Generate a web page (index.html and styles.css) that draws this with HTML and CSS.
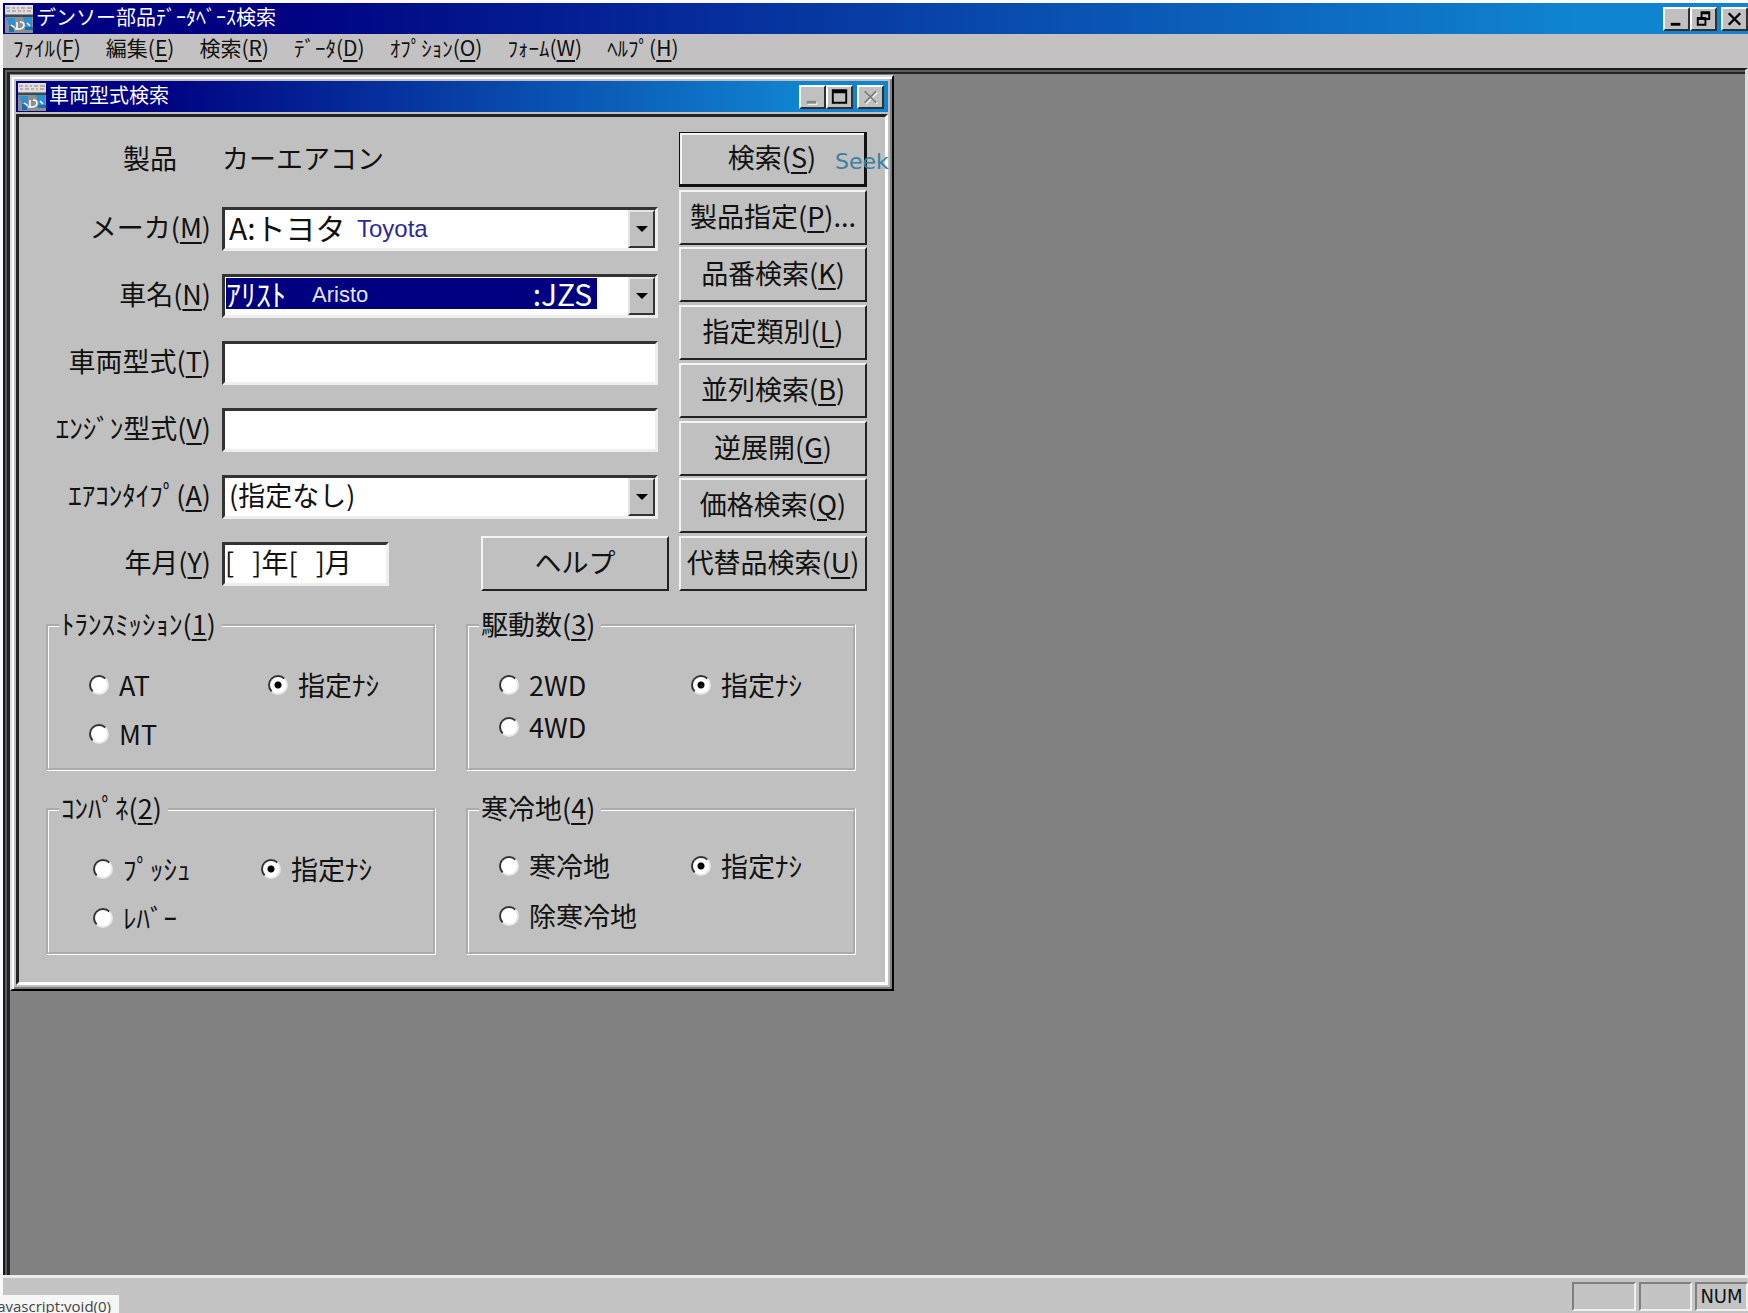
FILE: index.html
```html
<!DOCTYPE html>
<html lang="ja">
<head>
    <meta charset="UTF-8">
    <meta name="viewport" content="width=device-width, initial-scale=1.0">
    <title>デンソー部品ﾃﾞｰﾀﾍﾞｰｽ検索</title>
    <link rel="stylesheet" href="styles.css">
</head>
<body>

<!-- shared icons -->
<svg class="defs" aria-hidden="true">
    <symbol id="app-icon" viewBox="0 0 28 28">
        <rect width="28" height="28" fill="#8a8f92"/>
        <rect width="28" height="9" fill="#e2dcdc"/>
        <path d="M1 3h4M7 3h3M12 3h2M16 3h4M22 3h5M2 6h3M7 6h4M13 6h3M18 6h2M22 6h4" stroke="#8d8484" stroke-width="1"/>
        <path d="M0 10h28v2H0z" fill="#3b4a50"/>
        <path d="M1 13h9v7H4zM18 12h9v10h-6z" fill="#2f8fd0"/>
        <path d="M4 21h5v6H4zM20 22h8v3h-8z" fill="#1d6fae"/>
        <path d="M12 17v7M10 24h5q4-1 4-4t-4-3M6 20l4 3M22 18l3 3" fill="none" stroke="#fff" stroke-width="1.5"/>
    </symbol>
    <symbol id="arrow" viewBox="0 0 12 8">
        <path d="M0 1h12L6 7z" fill="#000"/>
    </symbol>
</svg>

<div class="app">
    <header class="title-bar">
        <svg class="app-icon"><use href="#app-icon"/></svg>
        <h1>デンソー部品ﾃﾞｰﾀﾍﾞｰｽ検索</h1>
        <div class="window-buttons">
            <button type="button" aria-label="最小化"><svg viewBox="0 0 24 20"><path d="M6 14h10v3H6z"/></svg></button>
            <button type="button" aria-label="元に戻す"><svg viewBox="0 0 24 20"><path d="M9 2h10v9h-4v6H5V8h4zM11 5v3h4v1h2V5zM7 11v4h6v-4z" fill-rule="evenodd"/></svg></button>
            <button type="button" aria-label="閉じる" class="close"><svg viewBox="0 0 24 20"><path d="M6 4l12 12M18 4L6 16" stroke="#000" stroke-width="2.5"/></svg></button>
        </div>
    </header>

    <nav class="menu">
        <button type="button">ﾌｧｲﾙ(<u>F</u>)</button>
        <button type="button">編集(<u>E</u>)</button>
        <button type="button">検索(<u>R</u>)</button>
        <button type="button">ﾃﾞｰﾀ(<u>D</u>)</button>
        <button type="button">ｵﾌﾟｼｮﾝ(<u>O</u>)</button>
        <button type="button">ﾌｫｰﾑ(<u>W</u>)</button>
        <button type="button">ﾍﾙﾌﾟ(<u>H</u>)</button>
    </nav>

    <main class="workspace">
        <section class="window">
            <div class="title-bar">
                <svg class="app-icon"><use href="#app-icon"/></svg>
                <h2>車両型式検索</h2>
                <div class="window-buttons">
                    <button type="button" aria-label="最小化"><svg viewBox="0 0 24 20"><path d="M7 15h10v3H7z" fill="#fff"/><path d="M6 14h10v3H6z" fill="#858585"/></svg></button>
                    <button type="button" aria-label="最大化"><svg viewBox="0 0 24 20"><path d="M4 2h16v15H4zM6 6v9h12V6z" fill-rule="evenodd"/></svg></button>
                    <button type="button" aria-label="閉じる" class="close" disabled><svg viewBox="0 0 24 20"><path d="M7 5l12 12M19 5L7 17" stroke="#fff" stroke-width="2"/><path d="M6 4l12 12M18 4L6 16" stroke="#808080" stroke-width="2"/></svg></button>
                </div>
            </div>

            <form class="panel">
                <div class="search">
                    <div class="fields">
                        <div class="row product">
                            <span class="label">製品</span>
                            <span class="value">カーエアコン</span>
                        </div>
                        <div class="row">
                            <label class="label" for="maker">メーカ(<u>M</u>)</label>
                            <div class="combo">
                                <select id="maker" class="wide-text">
                                    <option>A:トヨタ</option>
                                </select>
                                <span class="drop"><svg><use href="#arrow"/></svg></span>
                                <span class="note note-maker">Toyota</span>
                            </div>
                        </div>
                        <div class="row">
                            <label class="label" for="car">車名(<u>N</u>)</label>
                            <div class="combo">
                                <select id="car" class="wide-text selected">
                                    <option>ｱﾘｽﾄ　　　　　　　　&nbsp;:JZS</option>
                                </select>
                                <span class="drop"><svg><use href="#arrow"/></svg></span>
                                <span class="note note-car">Aristo</span>
                            </div>
                        </div>
                        <div class="row">
                            <label class="label" for="model">車両型式(<u>T</u>)</label>
                            <input type="text" id="model">
                        </div>
                        <div class="row">
                            <label class="label" for="engine">ｴﾝｼﾞﾝ型式(<u>V</u>)</label>
                            <input type="text" id="engine">
                        </div>
                        <div class="row">
                            <label class="label" for="aircon">ｴｱｺﾝﾀｲﾌﾟ(<u>A</u>)</label>
                            <div class="combo">
                                <select id="aircon">
                                    <option>(指定なし)</option>
                                </select>
                                <span class="drop"><svg><use href="#arrow"/></svg></span>
                            </div>
                        </div>
                        <div class="row">
                            <label class="label" for="date">年月(<u>Y</u>)</label>
                            <input type="text" id="date" class="date" value="[&nbsp;&nbsp;&nbsp;]年[&nbsp;&nbsp;&nbsp;]月">
                            <button type="button" class="btn help">ヘルプ</button>
                        </div>
                    </div>

                    <div class="actions">
                        <button type="submit" class="btn default">検索(<u>S</u>)</button>
                        <span class="note note-seek">Seek</span>
                        <button type="button" class="btn">製品指定(<u>P</u>)...</button>
                        <button type="button" class="btn">品番検索(<u>K</u>)</button>
                        <button type="button" class="btn">指定類別(<u>L</u>)</button>
                        <button type="button" class="btn">並列検索(<u>B</u>)</button>
                        <button type="button" class="btn">逆展開(<u>G</u>)</button>
                        <button type="button" class="btn">価格検索(<u>Q</u>)</button>
                        <button type="button" class="btn">代替品検索(<u>U</u>)</button>
                    </div>
                </div>

                <div class="groups">
                    <fieldset class="transmission">
                        <legend>ﾄﾗﾝｽﾐｯｼｮﾝ(<u>1</u>)</legend>
                        <div class="options">
                            <label><input type="radio" name="transmission">AT</label>
                            <label><input type="radio" name="transmission" checked>指定ﾅｼ</label>
                            <label><input type="radio" name="transmission">MT</label>
                        </div>
                    </fieldset>
                    <fieldset class="drive">
                        <legend>駆動数(<u>3</u>)</legend>
                        <div class="options">
                            <label><input type="radio" name="drive">2WD</label>
                            <label><input type="radio" name="drive" checked>指定ﾅｼ</label>
                            <label><input type="radio" name="drive">4WD</label>
                        </div>
                    </fieldset>
                    <fieldset class="control">
                        <legend>ｺﾝﾊﾟﾈ(<u>2</u>)</legend>
                        <div class="options">
                            <label><input type="radio" name="control">ﾌﾟｯｼｭ</label>
                            <label><input type="radio" name="control" checked>指定ﾅｼ</label>
                            <label><input type="radio" name="control">ﾚﾊﾞｰ</label>
                        </div>
                    </fieldset>
                    <fieldset class="cold">
                        <legend>寒冷地(<u>4</u>)</legend>
                        <div class="options">
                            <label><input type="radio" name="cold">寒冷地</label>
                            <label><input type="radio" name="cold" checked>指定ﾅｼ</label>
                            <label><input type="radio" name="cold">除寒冷地</label>
                        </div>
                    </fieldset>
                </div>
            </form>
        </section>
    </main>

    <footer class="status-bar">
        <span class="cell cell-wide"></span>
        <span class="cell"></span>
        <span class="cell">NUM</span>
    </footer>
</div>

<div class="link-hint"><span>javascript:void(0)</span></div>

</body>
</html>
```
FILE: styles.css
```css
* {
    margin: 0;
    padding: 0;
    box-sizing: border-box;
}
body {
    font-family: "Noto Sans CJK JP", sans-serif;
    font-weight: 400;
    font-size: 27px;
    line-height: 32px;
    color: #111;
    background-color: #fafafa;
}
button,
input,
select {
    font: inherit;
    color: inherit;
}
u {
    text-decoration-thickness: 2px;
    text-underline-offset: 4px;
}
.defs {
    position: absolute;
    width: 0;
    height: 0;
}
.app {
    display: flex;
    flex-direction: column;
    height: 100vh;
    padding: 3px 0 0 3px;
}

/* title bars */
.title-bar {
    display: flex;
    align-items: center;
    height: 31px;
    padding: 0 4px 0 2px;
    gap: 3px;
    background: linear-gradient(to right, #000080 15%, #1084d0 90%);
    color: #fff;
    flex: none;
}
.title-bar h1,
.title-bar h2 {
    padding-bottom: 3px;
    font-size: 20px;
    font-weight: 400;
    line-height: 28px;
}
.app-icon {
    width: 28px;
    height: 28px;
}
.window-buttons {
    display: flex;
    margin-left: auto;
}
.window-buttons button {
    width: 27px;
    height: 24px;
    background-color: #c0c0c0;
    border: 2px solid;
    border-color: #fff #303030 #303030 #fff;
}
.window-buttons .close {
    margin-left: 4px;
}
.window-buttons svg {
    display: block;
    width: 100%;
    height: 100%;
}
.app > .title-bar {
    padding-right: 0;
}

/* menu */
.menu {
    display: flex;
    gap: 25px;
    height: 34px;
    padding: 0 10px;
    background-color: #c3c1c1;
    flex: none;
}
.menu button {
    border: none;
    background: none;
    font-size: 21px;
    line-height: 26px;
    height: 26px;
}

/* workspace */
.workspace {
    flex: 1;
    display: flex;
    align-items: flex-start;
    padding: 5px;
    background-color: #818181;
    border: solid;
    border-width: 2px 3px 0 2px;
    border-color: #1a1a1c #dcdcdc #1a1a1c #1a1a1c;
    box-shadow: inset 2px 2px #5c5c5e, inset 5px 4px #242426;
}
.window {
    padding: 4px;
    background-color: #c0c0c0;
    border: 2px solid;
    border-color: #dcdcdc #000 #000 #dcdcdc;
    box-shadow: inset 2px 2px #fff, inset -2px -2px #808080;
}
.panel {
    margin-top: 2px;
    padding: 15px 18px 27px;
    border: 3px solid;
    border-color: #222 #fff #fff #222;
}
.search {
    display: flex;
    gap: 10px;
}
.fields {
    display: flex;
    flex-direction: column;
    gap: 12px;
    width: 632px;
}
.row {
    display: flex;
    align-items: center;
    gap: 11px;
    height: 55px;
}
.label,
.value {
    padding-bottom: 4px;
}
.label {
    width: 174px;
    text-align: right;
    white-space: nowrap;
    flex: none;
}
.product {
    margin-bottom: 2px;
}
.product .label {
    padding-right: 34px;
}
.row input,
.combo {
    width: 436px;
    height: 44px;
    background-color: #fff;
    border: 3px solid;
    border-color: #333 #eee #eee #333;
}
.row input {
    padding: 0 0 4px;
    outline: none;
}
.row .date {
    width: 167px;
}
.combo {
    position: relative;
    display: flex;
}
.combo select {
    flex: 1;
    min-width: 0;
    padding: 0 4px 3px;
    border: none;
    outline: none;
    appearance: none;
    background-color: #fff;
}
.combo .wide-text {
    font-size: 30px;
}
.combo .selected {
    padding: 0 1px 8px;
    color: #fff;
    background: linear-gradient(#000080, #000080) 1px 1px / 371px 31px no-repeat #fff;
}
.combo .selected option {
    color: #000;
}
.drop {
    display: flex;
    align-items: center;
    justify-content: center;
    width: 27px;
    background-color: #c0c0c0;
    border: 2px solid;
    border-color: #e4e4e4 #333 #333 #e4e4e4;
    pointer-events: none;
}
.drop svg {
    width: 12px;
    height: 8px;
}

/* english notes laid over the controls */
.note {
    position: absolute;
    font-family: "Liberation Sans", Arial, sans-serif;
    pointer-events: none;
}
.note-maker {
    left: 132px;
    top: 3px;
    font-size: 24px;
    color: #2a2a9c;
}
.note-car {
    left: 87px;
    top: 2px;
    font-size: 22px;
    color: #e4e4f4;
}
.note-seek {
    left: 156px;
    top: 14px;
    font-family: "DejaVu Sans", Verdana, sans-serif;
    font-size: 22px;
    color: #3c7f9c;
}

/* buttons */
.actions {
    position: relative;
    display: flex;
    flex-direction: column;
    justify-content: space-between;
    width: 188px;
}
.btn {
    width: 188px;
    height: 55px;
    padding-bottom: 3px;
    background-color: #c0c0c0;
    border: 2px solid;
    border-color: #f4f4f4 #222 #222 #f4f4f4;
    white-space: nowrap;
}
.default {
    border-color: #111;
    border-width: 1px 3px 3px 1px;
    box-shadow: inset 2px 2px #f4f4f4;
}
.help {
    margin-left: auto;
}

/* option groups */
.groups {
    display: grid;
    grid-template-columns: 1fr 1fr;
    gap: 22px 30px;
    margin: 18px 11px 0 9px;
}
fieldset {
    height: 162px;
    padding: 0 10px;
    border: 3px groove #fff;
}
legend {
    padding: 0 6px 3px 2px;
    line-height: 29px;
}
.options {
    display: grid;
    align-items: center;
    grid-auto-rows: 34px;
}
.options label {
    display: flex;
    align-items: center;
    gap: 10px;
    line-height: 34px;
}
.transmission .options {
    grid-template-columns: 179px 1fr;
    row-gap: 15px;
    padding: 27px 0 0 30px;
}
.control .options {
    grid-template-columns: 168px 1fr;
    row-gap: 15px;
    padding: 27px 0 0 34px;
}
.drive .options {
    grid-template-columns: 192px 1fr;
    row-gap: 8px;
    padding: 27px 0 0 20px;
}
.cold .options {
    grid-template-columns: 192px 1fr;
    row-gap: 16px;
    padding: 24px 0 0 20px;
}
input[type="radio"] {
    appearance: none;
    width: 20px;
    height: 20px;
    border: 2px solid;
    border-color: #333 #e8e8e8 #e8e8e8 #333;
    border-radius: 50%;
    background-color: #fff;
}
input[type="radio"]:checked {
    background-image: radial-gradient(circle, #000 3px, #fff 4px);
}

/* status bar */
.status-bar {
    display: flex;
    justify-content: flex-end;
    gap: 3px;
    height: 38px;
    padding: 4px 0 2px;
    background-color: #c4c4c4;
    border-top: 3px solid #ececec;
    flex: none;
}
.cell {
    width: 53px;
    text-align: center;
    font-family: "DejaVu Sans Condensed", "Open Sans", sans-serif;
    font-size: 20px;
    line-height: 24px;
    border: 2px solid;
    border-color: #808080 #f0f0f0 #f0f0f0 #808080;
}
.cell-wide {
    width: 64px;
}
.link-hint {
    position: fixed;
    left: 0;
    bottom: 0;
    display: flex;
    justify-content: flex-end;
    width: 119px;
    height: 18px;
    padding-right: 8px;
    overflow: hidden;
    background-color: #f6f6f6;
    font-family: "Open Sans", sans-serif;
    font-size: 15px;
    line-height: 22px;
    color: #444;
}
```
